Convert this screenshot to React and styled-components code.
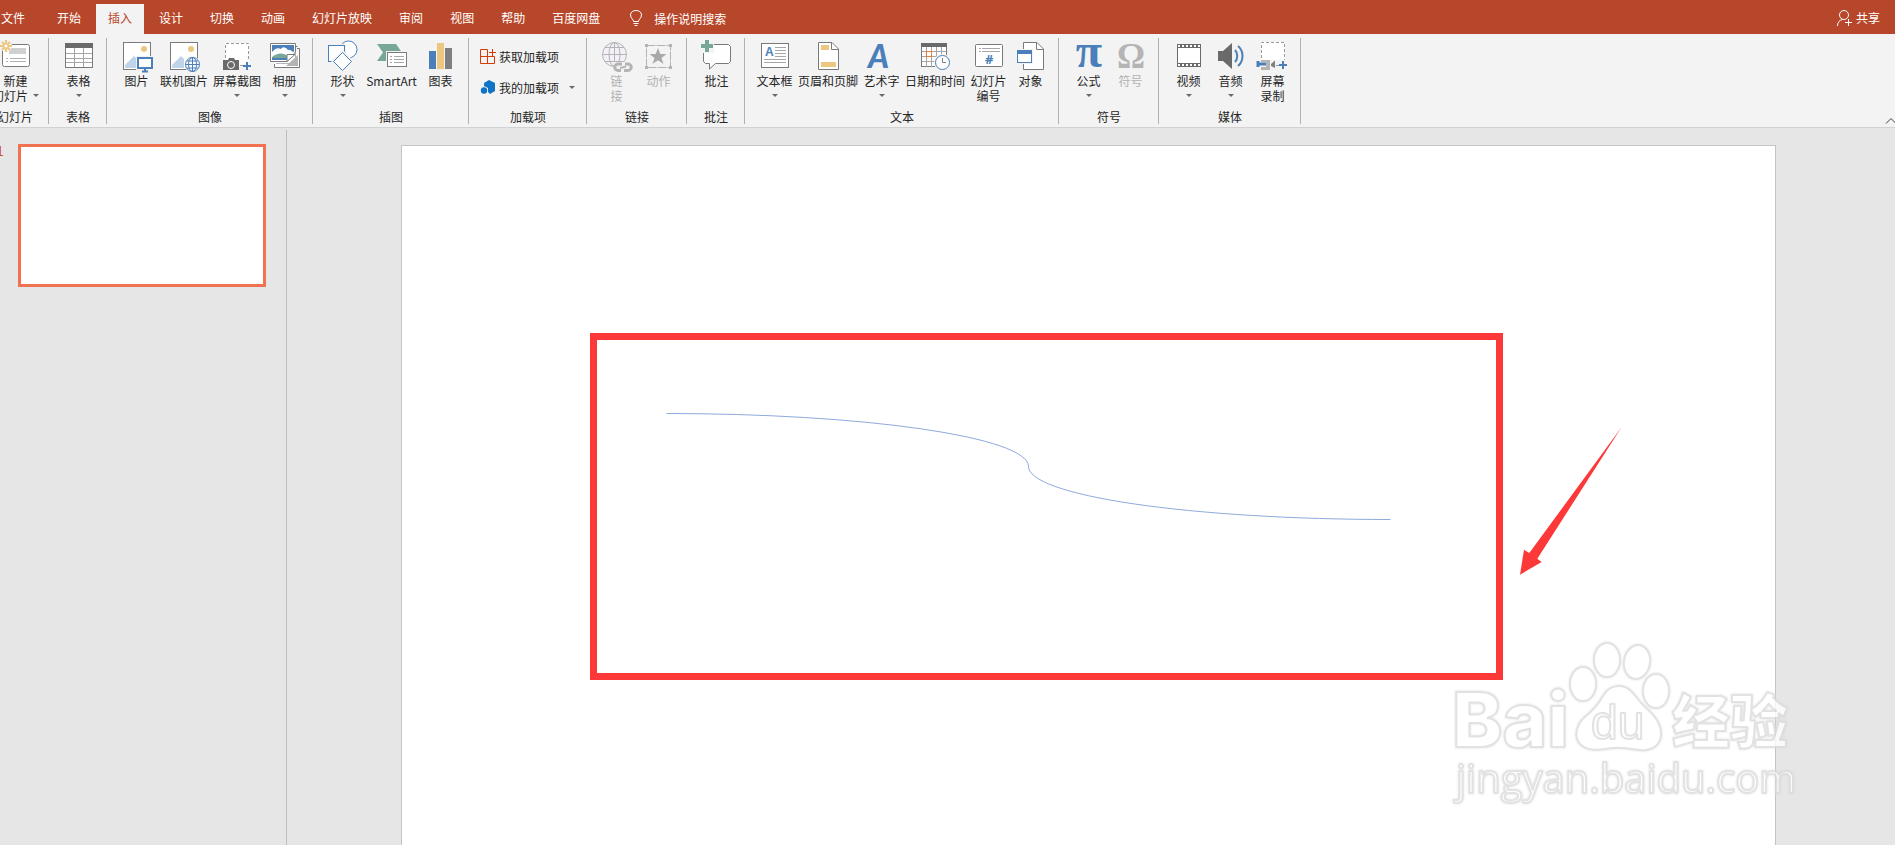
import React from "react";
import styled, { createGlobalStyle, css } from "styled-components";

const GlobalStyle = createGlobalStyle`
  * {
    box-sizing: border-box;
  }
  body {
    margin: 0;
    overflow: hidden;
    font-family: "Noto Sans CJK SC", "Noto Sans", sans-serif;
    font-size: 12px;
    line-height: 15px;
    color: #262626;
  }
  button, input {
    font: inherit;
    color: inherit;
    border: none;
    background: none;
    padding: 0;
    margin: 0;
  }
`;

const Wrapper = styled.div`
  height: 100vh;
  display: flex;
  flex-direction: column;
  background-color: #e6e6e6;
  overflow: hidden;
`;

// Tab bar

const TabBar = styled.nav`
  flex: none;
  height: 34px;
  display: flex;
  align-items: flex-end;
  background-color: #b7472a;
  color: white;
`;

const TabList = styled.div`
  display: flex;
  gap: 3px;
`;

const Tab = styled.button`
  height: 30px;
  padding: 0 12px 4px;
  white-space: nowrap;
  ${(props) =>
    props.$file &&
    css`
      padding-left: 1px;
      margin-right: 5px;
    `}
  ${(props) =>
    props.$active &&
    css`
      background-color: #f3f3f3;
      color: #b7472a;
    `}
`;

const SearchLabel = styled.label`
  height: 30px;
  margin-left: 16px;
  padding-bottom: 2px;
  display: flex;
  align-items: center;
  gap: 10px;
`;

const SearchInput = styled.input`
  width: 120px;
  outline: none;
  &::placeholder {
    color: white;
    opacity: 1;
  }
`;

const ShareButton = styled.button`
  height: 30px;
  margin-left: auto;
  margin-right: 15px;
  padding-bottom: 4px;
  display: flex;
  align-items: center;
  gap: 4px;
`;

// Ribbon

const Ribbon = styled.div`
  flex: none;
  height: 94px;
  padding-top: 4px;
  display: flex;
  align-items: flex-start;
  background-color: #f3f3f3;
  border-bottom: 1px solid #d2d2d2;
`;

const Group = styled.section`
  flex: none;
  height: 86px;
  padding: 2px 7px 0 8px;
  display: flex;
  flex-direction: column;
  justify-content: space-between;
  border-right: 1px solid #b1b1b1;
  ${(props) =>
    props.$cut &&
    css`
      margin-left: -19px;
    `}
`;

const GroupBody = styled.div`
  display: flex;
  align-items: flex-start;
`;

const GroupTitle = styled.div`
  text-align: center;
`;

const BigButton = styled.button`
  min-width: ${(props) => (props.$wide ? 56 : 42)}px;
  padding: 0 2px 0 3px;
  display: flex;
  flex-direction: column;
  align-items: center;
  white-space: nowrap;
  &:disabled {
    color: #b1b1b1;
  }
`;

const ButtonText = styled.span`
  margin-top: 1px;
`;

const SecondLine = styled.span`
  height: 15px;
  display: flex;
  align-items: center;
  gap: 5px;
`;

const Caret = styled.span`
  border: 3px solid transparent;
  border-top-color: #6a6a6a;
  border-bottom-width: 0;
`;

const AddinList = styled.div`
  width: 102px;
  padding: 8px 0 0 3px;
  display: flex;
  flex-direction: column;
  gap: 15px;
`;

const AddinButton = styled.button`
  height: 16px;
  display: flex;
  align-items: center;
  gap: 3px;
  white-space: nowrap;
  ${Caret} {
    margin-left: 7px;
  }
`;

const CollapseButton = styled.button`
  align-self: flex-end;
  height: 15px;
  margin-left: auto;
  margin-right: -2px;
`;

// Workspace

const Workspace = styled.div`
  flex: 1;
  min-height: 0;
  padding-top: 2px;
  display: flex;
`;

const Sidebar = styled.aside`
  flex: none;
  width: 287px;
  padding-top: 14px;
  display: flex;
  align-items: flex-start;
  border-right: 1px solid #bdbdbd;
`;

const SlideNumber = styled.span`
  width: 18px;
  margin-left: -4px;
  margin-right: 4px;
  font-size: 14px;
  line-height: 12px;
  color: #d24726;
`;

const Thumbnail = styled.button`
  width: 248px;
  height: 143px;
  background-color: white;
  border: 3px solid #f07250;
`;

const Editor = styled.main`
  flex: 1;
  min-width: 0;
  padding: 15px 119px 0 114px;
`;

const Slide = styled.div`
  aspect-ratio: 16 / 9;
  background-color: white;
  border: 1px solid #c4c4c4;
`;

const SlideDrawing = styled.svg`
  display: block;
  width: 100%;
  overflow: visible;
`;

const WatermarkGroup = styled.g`
  fill: #fff;
  stroke: #dcdcdc;
  stroke-width: 2px;
  stroke-linejoin: round;
  opacity: 0.8;
  filter: drop-shadow(0 0 1px #d8d8d8);
`;

const Icon = styled.svg`
  flex: none;
  display: block;
  width: 32px;
  height: 32px;
  fill: none;
`;

const SmallIcon = styled(Icon)`
  width: 16px;
  height: 16px;
`;

const GREY = "#7a7a7a";
const BLUE = "#4a7fb9";
const GOLD = "#edc77f";
const PALE = "#c0d3e8";
const GREEN = "#76a797";
const FADED = "#b4b4b4";

const Picture = () => (
  <>
    <rect x="2.5" y="2.5" width="27" height="27" fill="#fff" stroke={GREY} />
    <path d="M4 28V25L13 16L16 19V28Z" fill={PALE} />
    <circle cx="23" cy="9" r="3" fill={GOLD} />
  </>
);

const Plus = ({ x, y }) => (
  <path d={`M${x - 4} ${y}H${x + 4}M${x} ${y - 4}V${y + 4}`} stroke={BLUE} strokeWidth="2" />
);

const icons = {
  newSlide: (
    <>
      <rect x="2.5" y="4.5" width="27" height="22" rx="2" fill="#fff" stroke={GREY} />
      <rect x="9" y="8" width="17" height="6" fill="#d0d0d0" />
      <path d="M6 18.5H8M10 18.5H26M6 21.5H8M10 21.5H26" stroke="#b0b0b0" />
      <circle cx="6" cy="6" r="6" fill="#f3f3f3" />
      <path d="M6 0V12M0 6H12M2 2L10 10M10 2L2 10" stroke={GOLD} strokeWidth="2" />
      <circle cx="6" cy="6" r="2" fill="#fff" stroke={GOLD} />
    </>
  ),
  table: (
    <>
      <rect x="2.5" y="3.5" width="27" height="24" fill="#fff" stroke={GREY} />
      <path d="M2 3H30V8H2Z" fill="#6a6a6a" />
      <path d="M3 13.5H29M3 18.5H29M3 22.5H29M11.5 8V27M20.5 8V27" stroke="#a6a6a6" />
    </>
  ),
  picture: (
    <>
      <Picture />
      <path d="M15 16H33V30H15Z" fill="#f3f3f3" />
      <rect x="17" y="18" width="14" height="10" fill="#fff" stroke={BLUE} strokeWidth="2" />
      <path d="M21 31.5H27M24 29V31" stroke={BLUE} strokeWidth="2" />
    </>
  ),
  online: (
    <>
      <Picture />
      <circle cx="24.5" cy="24.5" r="8" fill="#f3f3f3" />
      <circle cx="24.5" cy="24.5" r="7" fill="#fff" stroke={BLUE} />
      <path d="M17.5 24.5H31.5M24.5 17.5V31.5M19 21H30M19 28H30" stroke={BLUE} />
      <ellipse cx="24.5" cy="24.5" rx="4" ry="7" stroke={BLUE} />
    </>
  ),
  screenshot: (
    <>
      <path d="M4 3H28V27H4Z" fill="#fff" />
      <path d="M4.5 18V3.5H27.5V21M19 25.5H22" stroke="#9a9a9a" strokeDasharray="3 2" />
      <path d="M2 20H7L8 18H13L14 20H18V30H2Z" fill="#6a6a6a" />
      <circle cx="10" cy="25" r="3.5" fill="#6a6a6a" stroke="#fff" />
      <Plus x={26} y={26} />
    </>
  ),
  album: (
    <>
      <path d="M7 11H30.5V27.5H5.5V23" fill="#fff" />
      <path d="M28 8.5H30.5V27.5H5.5V24M26 6.5H28.5" stroke={GREY} />
      <path d="M17 26L29 15V26Z" fill="#b4b4b4" />
      <path d="M7 23.5H26.5V12" stroke="#b4b4b4" />
      <path d="M1.5 3.5H26.5V12L18 21.5H1.5Z" fill="#fff" stroke={GREY} />
      <path d="M3 5H25V12C22 12 22 9 19 10C16 6 13 7 12 9C8 7 6 9 3 12Z" fill={BLUE} />
      <path d="M3 17C8 13 15 12 19 17V18H3Z" fill={GREEN} />
      <path d="M3 18H18V20H3Z" fill={BLUE} />
      <path d="M18 21.5V14.5H26Z" fill="#fff" stroke={GREY} />
    </>
  ),
  shapes: (
    <g fill="#fff" stroke={BLUE}>
      <circle cx="21.5" cy="9.5" r="8.5" />
      <path d="M0 4H19V23H0Z" fill="#f3f3f3" stroke="none" />
      <rect x="1.5" y="5.5" width="16" height="16" />
      <path d="M15.5 9.5L27 21L15.5 32L4 21Z" fill="#f3f3f3" stroke="none" />
      <path d="M15.5 12.5L24.5 21.5L15.5 30.5L6.5 21.5Z" />
    </g>
  ),
  smartart: (
    <>
      <path d="M1 4H20L26 12.5L20 21H1L7 12.5Z" fill={GREEN} />
      <path d="M10 11H32V28H10Z" fill="#f3f3f3" />
      <rect x="11.5" y="12.5" width="19" height="14" fill="#fff" stroke={GREY} />
      <path d="M14 16.5H16M18 16.5H28M14 19.5H16M18 19.5H28M14 22.5H16M18 22.5H28" stroke="#a6a6a6" />
    </>
  ),
  chart: (
    <>
      <path d="M4 11H11V29H4Z" fill={BLUE} />
      <path d="M12 3H19V29H12Z" fill={GOLD} />
      <path d="M20 8H27V29H20Z" fill="#7f7f7f" />
    </>
  ),
  link: (
    <>
      <g stroke={FADED}>
        <circle cx="13.5" cy="14.5" r="12" fill="#f5eff7" />
        <ellipse cx="13.5" cy="14.5" rx="5.5" ry="12" />
        <path d="M1.5 14.5H25.5M13.5 2.5V26.5M4 7.5H23M4 21.5H23" />
      </g>
      <path d="M13 22H32V33H13Z" fill="#f3f3f3" />
      <g stroke={FADED} strokeWidth="3">
        <path d="M21 24H17A3.2 3.2 0 0 0 17 30.5H20M23 30.5H27A3.2 3.2 0 0 0 27 24H24" />
        <path d="M19 28L25 26.5" strokeWidth="2" />
      </g>
    </>
  ),
  action: (
    <>
      <path d="M3.5 5.5H27.5V27.5H3.5Z" stroke={FADED} strokeDasharray="9 1" />
      <path d="M2 4H5V7H2ZM26 4H29V7H26ZM2 26H5V29H2ZM26 26H29V29H26Z" fill={FADED} />
      <path d="M15 8L17.3 14H23.5L18.5 18L20.5 24L15 20.3L9.5 24L11.5 18L6.5 14H12.7Z" fill="#a9a9a9" />
    </>
  ),
  comment: (
    <>
      <path d="M4.5 4.5H27.5L29.5 6.5V21.5L27.5 23.5H14.5L8.5 29V23.5H4.5L2.5 21.5V6.5Z" fill="#fff" stroke={GREY} />
      <path d="M-1 -1H13V13H-1Z" fill="#f3f3f3" />
      <path d="M0 6H12M6 0V12" stroke={GREEN} strokeWidth="4" />
    </>
  ),
  textbox: (
    <>
      <rect x="2.5" y="3.5" width="27" height="24" fill="#fff" stroke={GREY} />
      <text x="6" y="16" fontSize="12" fontWeight="700" fontFamily="Liberation Sans" fill={BLUE}>A</text>
      <path d="M16 7.5H27M16 10.5H27M16 13.5H27M16 16.5H27M5 19.5H27M5 22.5H27" stroke="#a6a6a6" />
    </>
  ),
  header: (
    <>
      <path d="M6.5 2.5H20L26.5 9V29.5H6.5Z" fill="#fff" stroke={GREY} />
      <path d="M19.5 2.5V9.5H26.5" stroke={GREY} />
      <path d="M9 5H17V10H9ZM9 22H24V27H9Z" fill={GOLD} />
    </>
  ),
  wordart: (
    <text x="2" y="28" fontSize="32" fontWeight="900" fontStyle="italic" fontFamily="Lato" fill={BLUE}>A</text>
  ),
  date: (
    <>
      <rect x="2.5" y="3.5" width="25" height="23" fill="#fff" stroke={GREY} />
      <path d="M2 3H28V7H2Z" fill="#6a6a6a" />
      <path d="M3 11.5H27M3 16.5H27M3 21.5H27M7.5 7V27M12.5 7V27M17.5 7V27M22.5 7V27" stroke="#a6a6a6" />
      <rect x="7.5" y="11.5" width="5" height="5" stroke="#ed7d31" />
      <circle cx="23.5" cy="22.5" r="8.5" fill="#f3f3f3" />
      <circle cx="23.5" cy="22.5" r="7" fill="#fff" stroke={BLUE} />
      <path d="M23.5 18V22.5H27" stroke={GREY} />
    </>
  ),
  number: (
    <>
      <rect x="2.5" y="4.5" width="27" height="22" rx="1" fill="#fff" stroke={GREY} />
      <path d="M6 8.5H8M9 8.5H27M6 11.5H8M9 11.5H27" stroke="#a6a6a6" />
      <text x="12" y="24" fontSize="13" fontWeight="700" fontFamily="Noto Sans" fill={BLUE}>#</text>
    </>
  ),
  object: (
    <>
      <path d="M8.5 2.5H22L28.5 9V29.5H8.5Z" fill="#fff" stroke={GREY} />
      <path d="M21.5 2.5V9.5H28.5" stroke={GREY} />
      <path d="M1 9H18V24H1Z" fill="#f3f3f3" />
      <rect x="2.5" y="10.5" width="14" height="12" fill="#fff" stroke={BLUE} />
      <path d="M2 10H17V14H2Z" fill={BLUE} />
    </>
  ),
  equation: (
    <text x="16" y="27" textAnchor="middle" fontSize="48" fontWeight="700" fontFamily="Liberation Serif" fill={BLUE}>π</text>
  ),
  symbol: (
    <text x="16" y="28" textAnchor="middle" fontSize="35" fontWeight="700" fontFamily="Liberation Serif" fill={FADED}>Ω</text>
  ),
  video: (
    <>
      <path d="M4 4H28V27H4Z" fill="#6a6a6a" />
      <path d="M5 8H27V23H5Z" fill="#fff" />
      <path d="M5 6H27M5 25H27" stroke="#fff" strokeWidth="2" strokeDasharray="2 2" />
    </>
  ),
  audio: (
    <>
      <path d="M3 11H8L17 3V29L8 21H3Z" fill="#6a6a6a" />
      <path d="M20 10C23 13 23 19 20 22M23 6C29 11 29 21 23 26" stroke={BLUE} strokeWidth="2" />
    </>
  ),
  record: (
    <>
      <path d="M4 2H28V20H4Z" fill="#fff" />
      <path d="M4.5 18V2.5H27.5V20M19 25.5H22" stroke="#9a9a9a" strokeDasharray="3 2" />
      <path d="M4 20H13V30H4V27H9V22H4Z" fill={FADED} />
      <path d="M14 24L18 20.5V28L14 26Z" fill="#7f7f7f" />
      <path d="M1 21V27M1 24H9" stroke={BLUE} strokeWidth="3" />
      <Plus x={26} y={25} />
    </>
  ),
};

const groups = [
  { title: "幻灯片", cut: true, items: [{ icon: "newSlide", text: "新建", second: "幻灯片", menu: true }] },
  { title: "表格", items: [{ icon: "table", text: "表格", menu: true }] },
  {
    title: "图像",
    items: [
      { icon: "picture", text: "图片" },
      { icon: "online", text: "联机图片" },
      { icon: "screenshot", text: "屏幕截图", menu: true },
      { icon: "album", text: "相册", menu: true },
    ],
  },
  {
    title: "插图",
    items: [
      { icon: "shapes", text: "形状", menu: true },
      { icon: "smartart", text: "SmartArt", wide: true },
      { icon: "chart", text: "图表" },
    ],
  },
  { title: "加载项", addins: true },
  {
    title: "链接",
    items: [
      { icon: "link", text: "链", second: "接", disabled: true },
      { icon: "action", text: "动作", disabled: true },
    ],
  },
  { title: "批注", items: [{ icon: "comment", text: "批注" }] },
  {
    title: "文本",
    items: [
      { icon: "textbox", text: "文本框", menu: true },
      { icon: "header", text: "页眉和页脚" },
      { icon: "wordart", text: "艺术字", menu: true },
      { icon: "date", text: "日期和时间" },
      { icon: "number", text: "幻灯片", second: "编号" },
      { icon: "object", text: "对象" },
    ],
  },
  {
    title: "符号",
    items: [
      { icon: "equation", text: "公式", menu: true },
      { icon: "symbol", text: "符号", disabled: true },
    ],
  },
  {
    title: "媒体",
    items: [
      { icon: "video", text: "视频", menu: true },
      { icon: "audio", text: "音频", menu: true },
      { icon: "record", text: "屏幕", second: "录制" },
    ],
  },
];

const tabs = ["文件", "开始", "插入", "设计", "切换", "动画", "幻灯片放映", "审阅", "视图", "帮助", "百度网盘"];

const RibbonButton = ({ item }) => (
  <BigButton type="button" disabled={item.disabled} $wide={item.wide}>
    <Icon viewBox="0 0 32 32" overflow="visible">{icons[item.icon]}</Icon>
    <ButtonText>{item.text}</ButtonText>
    {(item.second || item.menu) && (
      <SecondLine>
        {item.second}
        {item.menu && <Caret />}
      </SecondLine>
    )}
  </BigButton>
);

const Addins = () => (
  <AddinList>
    <AddinButton type="button">
      <SmallIcon viewBox="0 0 16 16">
        <path d="M7.5 1.5H0.5V15.5H14.5V8.5H0.5M7.5 1.5V15.5M9 4.5H16M12.5 1V8" stroke="#d83b01" />
      </SmallIcon>
      获取加载项
    </AddinButton>
    <AddinButton type="button">
      <SmallIcon viewBox="0 0 16 16">
        <path d="M4 4L9 1L15 4V12L10 15L8 13V9L4 7Z" fill="#0f73c6" />
        <circle cx="4" cy="11.5" r="3.2" fill="#0f73c6" />
      </SmallIcon>
      我的加载项
      <Caret />
    </AddinButton>
  </AddinList>
);

// White lettering with a soft grey outline, laid over the slide corner
const Watermark = () => (
  <WatermarkGroup>
    <text x="1050" y="601" fontSize="76" fontWeight="800" fontFamily="Inter">Bai</text>
    <ellipse cx="1181" cy="538" rx="13" ry="17" />
    <ellipse cx="1205" cy="514" rx="13" ry="17" />
    <ellipse cx="1235" cy="516" rx="13" ry="17" transform="rotate(10 1235 516)" />
    <ellipse cx="1254" cy="545" rx="13" ry="17" />
    <path d="M1217 540C1229 540 1233 551 1240 558C1248 566 1259 574 1259 588C1259 600 1249 605 1238 604C1228 603 1222 601 1210 602C1198 604 1186 606 1178 598C1171 590 1175 577 1184 570C1193 563 1197 557 1201 550C1205 543 1210 540 1217 540Z" />
    <text x="1189" y="593" fontSize="48" fontFamily="Liberation Sans">du</text>
    <text x="1270" y="597" fontSize="58" fontWeight="900" fontFamily="Noto Sans CJK SC">经验</text>
    <text x="1054" y="647" fontSize="40" fontFamily="Open Sans">jingyan.baidu.com</text>
  </WatermarkGroup>
);

const App = () => {
  return (
    <>
      <GlobalStyle />
      <Wrapper>
        <TabBar>
          <TabList>
            {tabs.map((name, i) => (
              <Tab key={name} type="button" $file={i === 0} $active={name === "插入"}>
                {name}
              </Tab>
            ))}
          </TabList>
          <SearchLabel>
            <SmallIcon viewBox="0 0 16 16" stroke="#fff">
              <path d="M5.5 11.5C5.5 9 2.5 8.5 2.5 5C2.5 2 5 0.5 8 0.5S13.5 2 13.5 5C13.5 8.5 10.5 9 10.5 11.5ZM5.5 13.5H10.5M6.5 15.5H9.5" />
            </SmallIcon>
            <SearchInput aria-label="操作说明搜索" placeholder="操作说明搜索" />
          </SearchLabel>
          <ShareButton type="button">
            <SmallIcon viewBox="0 0 16 16" stroke="#fff" overflow="visible">
              <circle cx="8" cy="6" r="4.5" />
              <path d="M1.500 17C1.500 13.500 3.500 11 6.500 10.500M9 13.500H16M12.500 10V17" />
            </SmallIcon>
            共享
          </ShareButton>
        </TabBar>

        <Ribbon>
          {groups.map((group) => (
            <Group key={group.title} $cut={group.cut}>
              <GroupBody>
                {group.addins ? <Addins /> : group.items.map((item) => <RibbonButton key={item.icon} item={item} />)}
              </GroupBody>
              <GroupTitle>{group.title}</GroupTitle>
            </Group>
          ))}
          <CollapseButton type="button" aria-label="折叠功能区">
            <svg width="12" height="8" viewBox="0 0 12 8" fill="none" stroke="#444">
              <path d="M1 6.5L6 1.5L11 6.5" />
            </svg>
          </CollapseButton>
        </Ribbon>

        <Workspace>
          <Sidebar>
            <SlideNumber>1</SlideNumber>
            <Thumbnail type="button" aria-label="幻灯片 1" />
          </Sidebar>
          <Editor>
            <Slide>
              <SlideDrawing viewBox="0 0 1373 772">
                <path d="M264.5 267.5A362 53 0 0 1 626.5 320A362 53 0 0 0 988.5 373.5" fill="none" stroke="#8faadc" />
                <rect x="191.5" y="190.5" width="906" height="340" fill="none" stroke="#fd3838" strokeWidth="7" />
                <path d="M1118 428.7L1122 403.7L1127.3 407L1219.5 281.3L1135.3 412.7L1139.7 416Z" fill="#fd3838" />
                <Watermark />
              </SlideDrawing>
            </Slide>
          </Editor>
        </Workspace>
      </Wrapper>
    </>
  );
};

export default App;
